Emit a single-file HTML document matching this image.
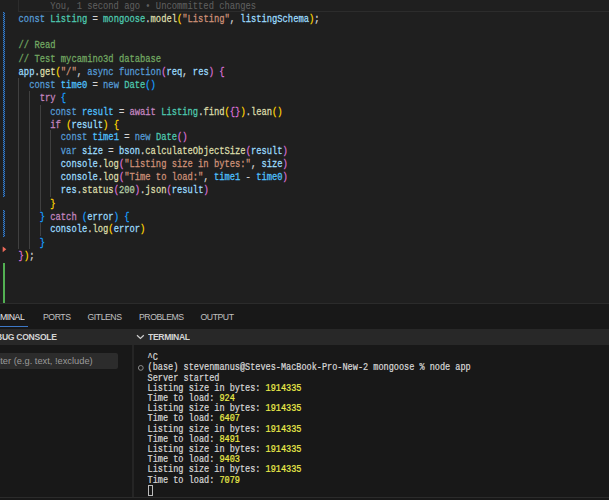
<!DOCTYPE html>
<html><head><meta charset="utf-8">
<style>
*{margin:0;padding:0;box-sizing:border-box}
html,body{width:609px;height:500px;overflow:hidden;background:#181818}
.abs{position:absolute}
#editor{position:absolute;left:0;top:0;width:609px;height:303px;background:#1f1f1f;overflow:hidden}
#code{position:absolute;left:18.6px;top:1.0px;font-family:"Liberation Mono",monospace;font-size:8.81px;letter-spacing:0px;-webkit-text-stroke:0.22px currentColor;line-height:11.44px;transform-origin:0 0;transform:scaleY(1.15);white-space:pre;color:#d4d4d4}
.k{color:#569cd6}.c{color:#c586c0}.t{color:#4ec9b0}.f{color:#dcdcaa}.v{color:#9cdcfe}.cv{color:#4fc1ff}
.s{color:#ce9178}.n{color:#b5cea8}.cm{color:#72a862}.b1{color:#ffd700}.b2{color:#da70d6}.b3{color:#179fff}
.blame{color:#5e5e5e;-webkit-text-stroke:0.1px currentColor}
.guide{position:absolute;width:1px;background:#404040}
.tr{position:absolute;left:147.6px;height:10px;font-family:"Liberation Mono",monospace;font-size:8.566px;letter-spacing:0px;line-height:10px;-webkit-text-stroke:0.2px currentColor;transform-origin:0 0;transform:scaleY(1.17);white-space:pre;color:#d6d6d6}
.hl{top:327.6px;height:16px;line-height:16px;font-family:"Liberation Sans",sans-serif;font-weight:bold;font-size:8.6px;color:#d4d4d4;white-space:nowrap;transform-origin:0 0;transform:scaleY(1.1)}
.y{color:#ebeb4a}
.tab{position:absolute;top:302.6px;height:24px;line-height:24px;font-family:"Liberation Sans",sans-serif;font-size:8.7px;letter-spacing:-0.45px;transform-origin:0 0;transform:scaleY(1.1);color:#c0c0c0}
</style></head><body>
<div id="editor">
  <div class="abs" style="left:18px;top:-2px;width:600px;height:13.6px;border:1px solid #2c2c2c"></div>
  <svg class="abs" style="left:2px;top:0" width="5" height="303"><defs><pattern id="zz" width="4" height="2" patternUnits="userSpaceOnUse"><rect x="1" y="0" width="1" height="1" fill="#347ccc"/><rect x="2" y="1" width="1" height="1" fill="#347ccc"/><rect x="2" y="0" width="1" height="1" fill="#1e3652"/><rect x="1" y="1" width="1" height="1" fill="#1e3652"/></pattern></defs><rect x="0" y="12" width="5" height="185" fill="url(#zz)"/><rect x="0" y="210" width="5" height="27" fill="url(#zz)"/></svg>
  
  <svg class="abs" style="left:2px;top:246px" width="6" height="7"><path d="M0.7 0.6 L4.3 3.3 L0.7 6.2Z" fill="#ee6a5a"/></svg>
  <div class="abs" style="left:3px;top:263px;width:2px;height:40px;background:#52b052"></div>
  <div class="guide" style="left:18px;top:78px;height:171px"></div>
  <div class="guide" style="left:29px;top:91px;height:158px"></div>
  <div class="guide" style="left:40px;top:105px;height:106px"></div>
  <div class="guide" style="left:40px;top:223px;height:13px"></div>
  <div class="guide" style="left:50px;top:130px;height:67px"></div>
<div id="code"><span class="blame">      You, 1 second ago • Uncommitted changes</span>
<span class="k">const</span> <span class="t">Listing</span> = <span class="t">mongoose</span>.<span class="f">model</span><span class="b1">(</span><span class="s">"Listing"</span>, <span class="v">listingSchema</span><span class="b1">)</span>;

<span class="cm">// Read</span>
<span class="cm">// Test mycamino3d database</span>
<span class="v">app</span>.<span class="f">get</span><span class="b1">(</span><span class="s">"/"</span>, <span class="k">async</span> <span class="k">function</span><span class="b2">(</span><span class="v">req</span>, <span class="v">res</span><span class="b2">)</span> <span class="b2">{</span>
  <span class="k">const</span> <span class="cv">time0</span> = <span class="k">new</span> <span class="t">Date</span><span class="b3">()</span>
    <span class="c">try</span> <span class="b3">{</span>
      <span class="k">const</span> <span class="cv">result</span> = <span class="c">await</span> <span class="t">Listing</span>.<span class="f">find</span><span class="b1">(</span><span class="b2">{}</span><span class="b1">)</span>.<span class="f">lean</span><span class="b1">()</span>
      <span class="c">if</span> <span class="b1">(</span><span class="v">result</span><span class="b1">)</span> <span class="b1">{</span>
        <span class="k">const</span> <span class="cv">time1</span> = <span class="k">new</span> <span class="t">Date</span><span class="b2">()</span>
        <span class="k">var</span> <span class="v">size</span> = <span class="v">bson</span>.<span class="f">calculateObjectSize</span><span class="b2">(</span><span class="v">result</span><span class="b2">)</span>
        <span class="v">console</span>.<span class="f">log</span><span class="b2">(</span><span class="s">"Listing size in bytes:"</span>, <span class="v">size</span><span class="b2">)</span>
        <span class="v">console</span>.<span class="f">log</span><span class="b2">(</span><span class="s">"Time to load:"</span>, <span class="cv">time1</span> - <span class="cv">time0</span><span class="b2">)</span>
        <span class="v">res</span>.<span class="f">status</span><span class="b2">(</span><span class="n">200</span><span class="b2">)</span>.<span class="f">json</span><span class="b2">(</span><span class="v">result</span><span class="b2">)</span>
      <span class="b1">}</span>
    <span class="b3">}</span> <span class="c">catch</span> <span class="b3">(</span><span class="v">error</span><span class="b3">)</span> <span class="b3">{</span>
      <span class="v">console</span>.<span class="f">log</span><span class="b1">(</span><span class="v">error</span><span class="b1">)</span>
    <span class="b3">}</span>
<span class="b2">}</span><span class="b1">)</span>;</div>
</div>
<div class="abs" style="left:0;top:303px;width:609px;height:1px;background:#2b2b2b"></div>
<!-- tabs -->
<div class="tab" style="left:0;color:#e7e7e7">MINAL</div>
<div class="abs" style="left:0;top:325.5px;width:27.5px;height:1.5px;background:#3d78c6"></div>
<div class="tab" style="left:43px">PORTS</div>
<div class="tab" style="left:87.5px">GITLENS</div>
<div class="tab" style="left:139px">PROBLEMS</div>
<div class="tab" style="left:200.5px">OUTPUT</div>
<!-- headers -->
<div class="abs" style="left:0;top:329px;width:609px;height:16px;background:#282828"></div>
<div class="abs" style="left:132px;top:345px;width:2px;height:152px;background:#252525"></div>
<div class="abs hl" style="right:552.3px;letter-spacing:-0.3px">DEBUG CONSOLE</div>
<svg class="abs" style="left:136px;top:333px" width="9" height="8"><path d="M1 2.2 L4.4 5.5 L7.8 2.2" fill="none" stroke="#d0d0d0" stroke-width="1.2"/></svg>
<div class="abs hl" style="left:148px;letter-spacing:-0.34px">TERMINAL</div>
<!-- filter -->
<div class="abs" style="left:-4px;top:352.5px;width:121.5px;height:16.6px;background:#2c2c2c;border-radius:2px"></div>
<div class="abs" style="right:516.3px;top:352.5px;height:17px;line-height:17px;font-family:'Liberation Sans',sans-serif;font-size:9.3px;color:#9a9a9a;white-space:nowrap">Filter (e.g. text, !exclude)</div>
<!-- terminal -->
<svg class="abs" style="left:137px;top:363.5px" width="8" height="8"><circle cx="3.8" cy="3.9" r="2.4" fill="none" stroke="#8c8c8c" stroke-width="1"/></svg>
<div class="tr" style="top:352.08px">^C</div>
<div class="tr" style="top:362.29px">(base) stevenmanus@Steves-MacBook-Pro-New-2 mongoose % node app</div>
<div class="tr" style="top:372.50px">Server started</div>
<div class="tr" style="top:382.71px">Listing size in bytes: <span class="y">1914335</span></div>
<div class="tr" style="top:392.92px">Time to load: <span class="y">924</span></div>
<div class="tr" style="top:403.13px">Listing size in bytes: <span class="y">1914335</span></div>
<div class="tr" style="top:413.34px">Time to load: <span class="y">6407</span></div>
<div class="tr" style="top:423.55px">Listing size in bytes: <span class="y">1914335</span></div>
<div class="tr" style="top:433.76px">Time to load: <span class="y">8491</span></div>
<div class="tr" style="top:443.97px">Listing size in bytes: <span class="y">1914335</span></div>
<div class="tr" style="top:454.18px">Time to load: <span class="y">9403</span></div>
<div class="tr" style="top:464.39px">Listing size in bytes: <span class="y">1914335</span></div>
<div class="tr" style="top:474.60px">Time to load: <span class="y">7079</span></div>
<div class="abs" style="left:147.7px;top:485.3px;width:5.5px;height:10.5px;border:1px solid #bbbbbb"></div>
<div class="abs" style="left:0;top:497px;width:609px;height:1px;background:#2b2b2b"></div>
</body></html>
